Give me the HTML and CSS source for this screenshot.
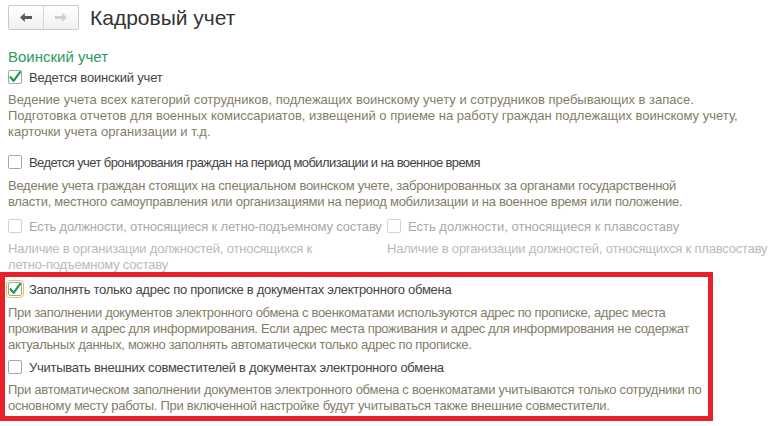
FILE: index.html
```html
<!DOCTYPE html>
<html lang="ru">
<head>
<meta charset="utf-8">
<title>Кадровый учет</title>
<link rel="stylesheet" href="styles.css">
</head>
<body>
<div class="page">
  <div class="header">
    <div class="nav">
      <div class="nav-btn">
        <svg width="14" height="11" viewBox="0 0 14 11"><path d="M1 5.5 L5.8 1 L5.8 4 L13 4 L13 7 L5.8 7 L5.8 10 Z" fill="#595959"/></svg>
      </div>
      <div class="nav-btn">
        <svg width="14" height="11" viewBox="0 0 14 11"><path d="M13 5.5 L8.2 1 L8.2 4 L1 4 L1 7 L8.2 7 L8.2 10 Z" fill="#cfcfcf"/></svg>
      </div>
    </div>
    <h1 class="title">Кадровый учет</h1>
  </div>

  <div class="group-title">Воинский учет</div>

  <div class="opt">
    <span class="cb checked"><svg width="14" height="14" viewBox="0 0 14 14"><path d="M2.5 7.2 L5.6 10.8 L12 2.2" fill="none" stroke="#1f9a4e" stroke-width="2.2" stroke-linecap="round" stroke-linejoin="round"/></svg></span>
    <span class="lbl l1">Ведется воинский учет</span>
  </div>
  <div class="desc d1">Ведение учета всех категорий сотрудников, подлежащих воинскому учету и сотрудников пребывающих в запасе.<br>Подготовка отчетов для военных комиссариатов, извещений о приеме на работу граждан подлежащих воинскому учету,<br>карточки учета организации и т.д.</div>

  <div class="opt o2">
    <span class="cb"></span>
    <span class="lbl l2">Ведется учет бронирования граждан на период мобилизации и на военное время</span>
  </div>
  <div class="desc d2">Ведение учета граждан стоящих на специальном воинском учете, забронированных за органами государственной<br>власти, местного самоуправления или организациями на период мобилизации и на военное время или положение.</div>

  <div class="cols">
    <div class="col">
      <div class="opt disabled">
        <span class="cb"></span>
        <span class="lbl">Есть должности, относящиеся к летно-подъемному составу</span>
      </div>
      <div class="desc dis">Наличие в организации должностей, относящихся к<br>летно-подъемному составу</div>
    </div>
    <div class="col">
      <div class="opt disabled">
        <span class="cb"></span>
        <span class="lbl l0">Есть должности, относящиеся к плавсоставу</span>
      </div>
      <div class="desc dis">Наличие в организации должностей, относящихся к плавсоставу</div>
    </div>
  </div>

  <div class="highlight">
    <div class="opt">
      <span class="cb checked focused"><svg width="14" height="14" viewBox="0 0 14 14"><path d="M2.5 7.2 L5.6 10.8 L12 2.2" fill="none" stroke="#1f9a4e" stroke-width="2.2" stroke-linecap="round" stroke-linejoin="round"/></svg></span>
      <span class="lbl">Заполнять только адрес по прописке в документах электронного обмена</span>
    </div>
    <div class="desc d4">При заполнении документов электронного обмена с военкоматами используются адрес по прописке, адрес места<br>проживания и адрес для информирования. Если адрес места проживания и адрес для информирования не содержат<br>актуальных данных, можно заполнять автоматически только адрес по прописке.</div>

    <div class="opt o5">
      <span class="cb"></span>
      <span class="lbl">Учитывать внешних совместителей в документах электронного обмена</span>
    </div>
    <div class="desc d5">При автоматическом заполнении документов электронного обмена с военкоматами учитываются только сотрудники по<br>основному месту работы. При включенной настройке будут учитываться также внешние совместители.</div>
  </div>
</div>
</body>
</html>
```

FILE: styles.css
```css
html, body {
  margin: 0;
  padding: 0;
  background: #ffffff;
}

body {
  font-family: "Liberation Sans", Arial, sans-serif;
  font-size: 13px;
  color: #444444;
}

.page {
  padding: 5px 0 0 8px;
  width: 782px;
  box-sizing: border-box;
  overflow: hidden;
}

.header {
  display: flex;
  align-items: center;
  height: 25px;
}

.nav {
  display: flex;
  height: 25px;
  border: 1px solid #c9c9c9;
  border-radius: 2px;
  box-sizing: border-box;
  background: linear-gradient(#ffffff, #f1f1f1);
}

.nav-btn {
  width: 34px;
  display: flex;
  align-items: center;
  justify-content: center;
}

.nav-btn + .nav-btn {
  border-left: 1px solid #d6d6d6;
}

.title {
  margin: 0 0 0 11px;
  font-size: 21px;
  font-weight: normal;
  color: #333333;
  line-height: 25px;
}

.group-title {
  margin-top: 17px;
  height: 20px;
  line-height: 20px;
  font-size: 15px;
  color: #2f9a5e;
}

.opt {
  display: flex;
  align-items: center;
  height: 20px;
  gap: 7px;
  white-space: nowrap;
}

.cb {
  width: 14px;
  height: 14px;
  border: 1px solid #a6a6a6;
  border-radius: 2px;
  box-sizing: border-box;
  background: #ffffff;
  display: flex;
  align-items: center;
  justify-content: center;
  flex: none;
  position: relative;
}

.cb svg {
  position: absolute;
  left: -1px;
  top: -1px;
}

.cb.focused {
  outline: 1px solid #e9c24e;
  outline-offset: 1px;
}

.lbl {
  color: #444444;
  letter-spacing: -0.27px;
}

.lbl.l1 { letter-spacing: -0.2px; }
.lbl.l2 { letter-spacing: -0.6px; }
.lbl.l0 { letter-spacing: 0; }

.disabled .cb {
  border-color: #d2d2d2;
}

.disabled .lbl {
  color: #a9a9a9;
  letter-spacing: -0.15px;
}

.disabled .lbl.l0 { letter-spacing: 0; }

.desc {
  line-height: 16px;
  color: #837d68;
  white-space: nowrap;
  letter-spacing: -0.2px;
}

.desc.d1 {
  letter-spacing: 0;
}

.desc.dis {
  color: #b9b9b9;
  margin-top: 5px;
  letter-spacing: -0.2px;
}

.d1 { margin-top: 5px; }
.o2 { margin-top: 12px; }
.d2 { margin-top: 6px; letter-spacing: -0.25px; }

.cols {
  display: grid;
  grid-template-columns: 379px auto;
  margin-top: 6px;
}

.highlight {
  margin-left: -8px;
  width: 713px;
  box-sizing: border-box;
  border: 5px solid #e8202a;
  margin-top: -1px;
  padding: 2px 0 2px 3px;
}

.desc.d4 { margin-top: 6px; letter-spacing: -0.32px; }
.o5 { margin-top: 4px; }
.desc.d5 { margin-top: 5px; letter-spacing: -0.27px; }
```
